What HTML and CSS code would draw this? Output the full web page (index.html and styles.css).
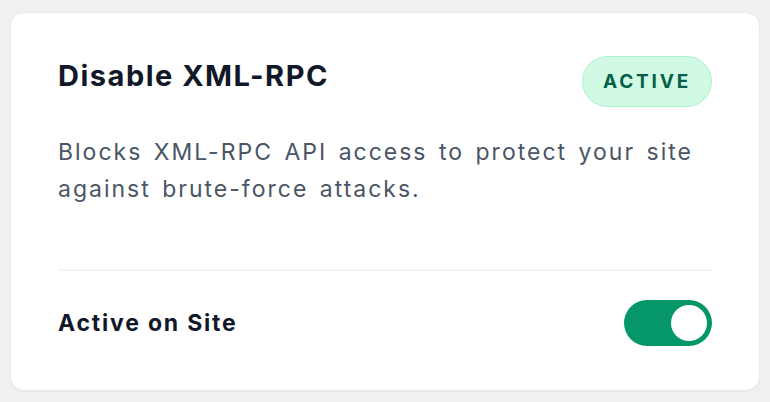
FILE: index.html
```html
<!DOCTYPE html>
<html lang="en">
<head>
    <meta charset="UTF-8">
    <meta name="viewport" content="width=device-width, initial-scale=1.0">
    <title>Disable XML-RPC</title>
    <link rel="stylesheet" href="styles.css">
</head>
<body>

<div class="card">
    <div class="card-header">
        <h2 class="card-title">Disable XML-RPC</h2>
        <span class="badge">Active</span>
    </div>

    <p class="card-desc">Blocks XML-RPC API access to protect your site against brute-force attacks.</p>

    <!-- Site toggle -->
    <div class="card-footer">
        <span class="footer-label">Active on Site</span>
        <button class="toggle on" onclick="this.classList.toggle('on')">
            <span class="knob"></span>
        </button>
    </div>
</div>

</body>
</html>
```

FILE: styles.css
```css
/* General Styles */
body {
    font-family: Inter, "Noto Sans", sans-serif;
    margin: 0;
    padding: 12px 10px 11px;
    background-color: #eff0f2;
}

/* Card */
.card {
    background-color: white;
    border-radius: 14px;
    border: 1px solid #e8eaee;
    padding: 43px 47px 44px;
    box-shadow: 0 1px 2px rgba(0, 0, 0, 0.04);
}

.card-header {
    display: flex;
    justify-content: space-between;
    align-items: flex-start;
}

.card-title {
    margin: 0;
    font-size: 29px;
    line-height: 39px;
    font-weight: 700;
    letter-spacing: 1.5px;
    color: #111827;
}

/* Status badge */
.badge {
    display: inline-block;
    padding: 0 20px;
    height: 49px;
    line-height: 49px;
    border-radius: 999px;
    background-color: #d1fae5;
    border: 1px solid #a7f3d0;
    color: #065f46;
    font-size: 19px;
    font-weight: 700;
    letter-spacing: 2.8px;
    text-transform: uppercase;
}

.card-desc {
    margin: 27px 0 61px;
    font-size: 23px;
    line-height: 37px;
    letter-spacing: 2px;
    word-spacing: 3px;
    color: #4a5565;
}

/* Footer */
.card-footer {
    display: flex;
    justify-content: space-between;
    align-items: center;
    border-top: 2px solid #f1f3f5;
    padding-top: 29px;
}

.footer-label {
    font-size: 23px;
    font-weight: 700;
    letter-spacing: 1.8px;
    color: #111827;
}

.toggle {
    width: 88px;
    height: 46px;
    border: none;
    border-radius: 999px;
    background-color: #d1d5db;
    padding: 5px;
    display: flex;
    cursor: pointer;
}

.toggle.on {
    background-color: #059669;
    justify-content: flex-end;
}

.knob {
    width: 36px;
    height: 36px;
    border-radius: 50%;
    background-color: white;
}
```
